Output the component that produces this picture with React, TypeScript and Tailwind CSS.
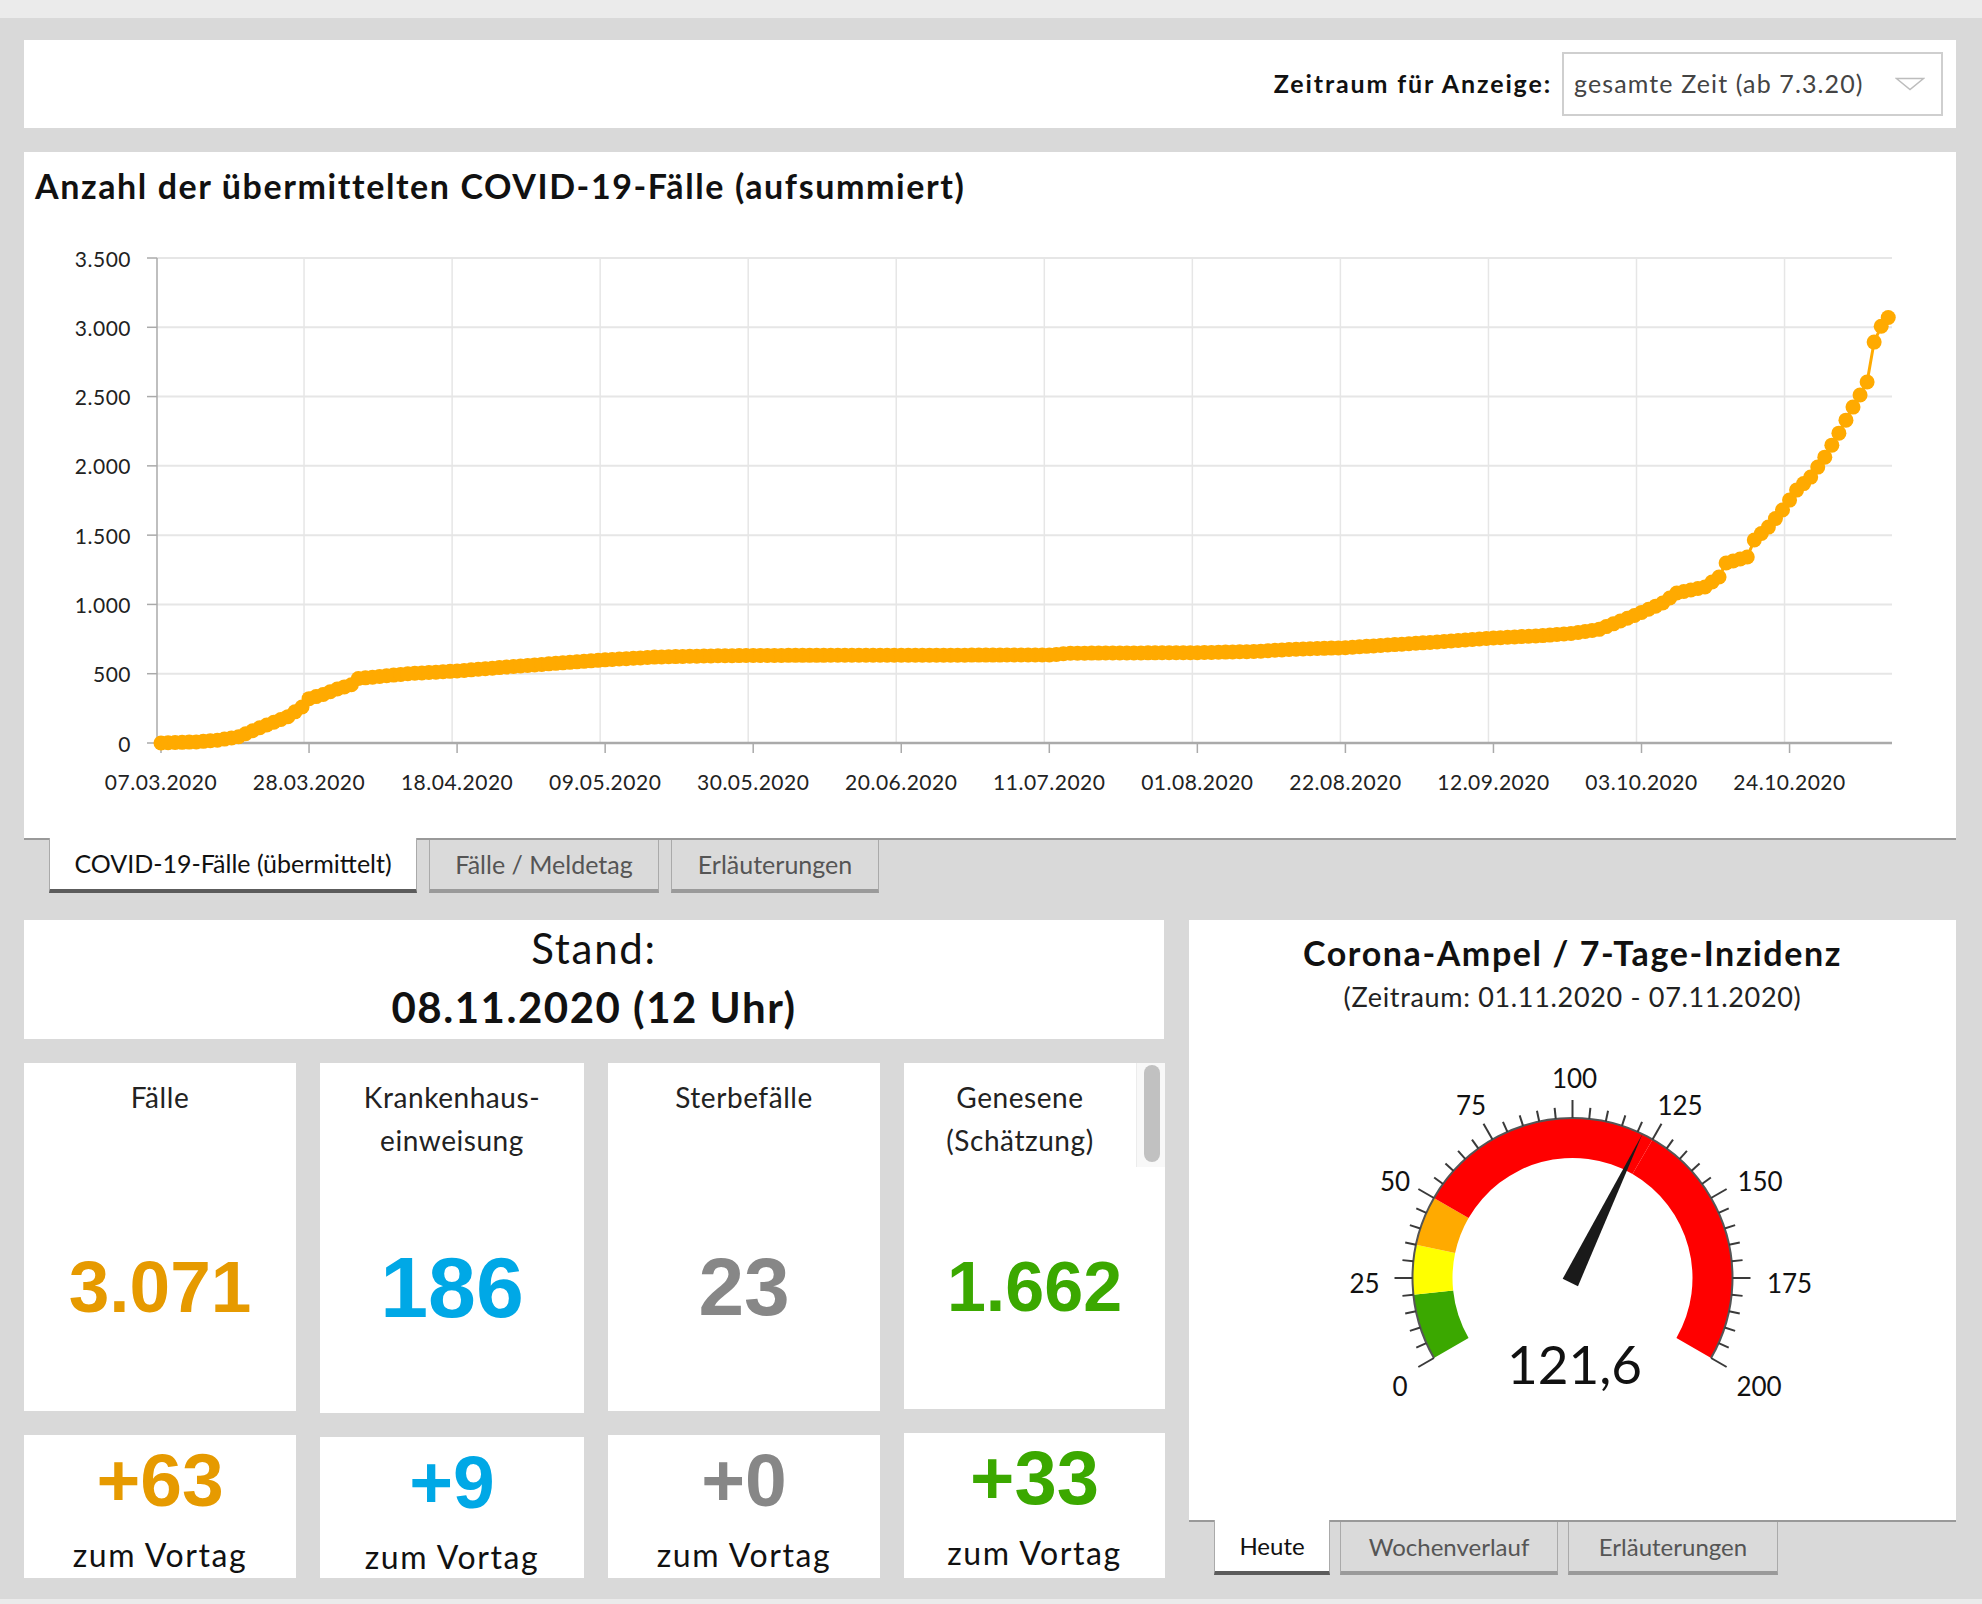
import React from 'react';

// cumulative case anchors (day since 07.03.2020, value)
const anchors: [number, number][] = [
  [0, 0], [5, 8], [8, 20], [11, 45], [14, 110], [16, 150], [18, 190], [20, 260], [21, 320],
  [23, 350], [25, 390], [27, 420], [28, 465], [31, 480], [35, 500], [42, 520], [49, 548],
  [56, 575], [63, 600], [70, 620], [77, 628], [84, 632], [126, 635], [129, 648], [147, 652],
  [155, 660], [160, 675], [168, 688], [175, 710], [182, 732], [189, 758], [196, 775], [200, 790],
  [204, 820], [209, 920], [213, 1010], [215, 1082], [219, 1126], [221, 1198], [222, 1299],
  [225, 1342], [226, 1465], [228, 1558], [230, 1681], [232, 1825], [234, 1919], [236, 2063],
  [238, 2236], [239, 2330], [240, 2424], [241, 2511], [242, 2605], [243, 2893], [244, 3008],
  [245, 3071],
];

function buildSeries() {
  const out: number[] = [];
  for (let d = 0; d <= 245; d++) {
    let i = 0;
    while (i < anchors.length - 1 && anchors[i + 1][0] < d) i++;
    const [d0, v0] = anchors[i];
    const [d1, v1] = anchors[Math.min(i + 1, anchors.length - 1)];
    out.push(d1 === d0 ? v0 : v0 + ((v1 - v0) * (d - d0)) / (d1 - d0));
  }
  return out;
}

const xLabels = [
  '07.03.2020', '28.03.2020', '18.04.2020', '09.05.2020', '30.05.2020', '20.06.2020',
  '11.07.2020', '01.08.2020', '22.08.2020', '12.09.2020', '03.10.2020', '24.10.2020',
];
const yLabels = ['0', '500', '1.000', '1.500', '2.000', '2.500', '3.000', '3.500'];

function CasesChart() {
  const series = buildSeries();
  const px = (d: number) => 137 + d * 7.05;
  const py = (v: number) => 537 - v * 0.13857;
  const line = series.map((v, d) => `${px(d).toFixed(1)},${py(v).toFixed(1)}`).join(' ');

  return (
    <svg width="1932" height="632" viewBox="0 0 1932 632" className="block">
      {/* horizontal grid */}
      {yLabels.map((l, i) => (
        <g key={l}>
          {i > 0 && <line x1="133" x2="1868" y1={py(i * 500)} y2={py(i * 500)} stroke="#e6e6e6" strokeWidth="2" />}
          <line x1="123" x2="133" y1={py(i * 500)} y2={py(i * 500)} stroke="#aaa" strokeWidth="1.5" />
          <text x="107" y={py(i * 500)} textAnchor="end" dominantBaseline="central" fontSize="21" letterSpacing="0.5" fill="#222">
            {l}
          </text>
        </g>
      ))}
      {/* vertical grid + ticks */}
      {xLabels.map((l, k) => {
        const x = px(k * 21);
        return (
          <g key={l}>
            {k > 0 && <line x1={x - 5} x2={x - 5} y1="52" y2="537" stroke="#e6e6e6" strokeWidth="1.5" />}
            <line x1={x} x2={x} y1="537" y2="547" stroke="#aaa" strokeWidth="1.5" />
            <text x={x} y="575" textAnchor="middle" dominantBaseline="central" fontSize="21" letterSpacing="0.5" fill="#222">
              {l}
            </text>
          </g>
        );
      })}
      <line x1="133" x2="133" y1="52" y2="537" stroke="#aaa" strokeWidth="1.5" />
      <line x1="133" x2="1868" y1="537" y2="537" stroke="#aaa" strokeWidth="2.5" />
      <polyline points={line} fill="none" stroke="#ffaa00" strokeWidth="3" />
      {series.map((v, d) => (
        <circle key={d} cx={px(d)} cy={py(v)} r="7.5" fill="#ffaa00" />
      ))}
    </svg>
  );
}

const CX = 383.5;
const CY = 264;
const ang = (v: number) => ((210 - 1.2 * v) * Math.PI) / 180;
const pt = (v: number, r: number): [number, number] => [CX + r * Math.cos(ang(v)), CY - r * Math.sin(ang(v))];

function band(v1: number, v2: number, ri: number, ro: number) {
  const [x1, y1] = pt(v1, ro);
  const [x2, y2] = pt(v2, ro);
  const [x3, y3] = pt(v2, ri);
  const [x4, y4] = pt(v1, ri);
  const large = (v2 - v1) * 1.2 > 180 ? 1 : 0;
  return `M${x1} ${y1} A${ro} ${ro} 0 ${large} 1 ${x2} ${y2} L${x3} ${y3} A${ri} ${ri} 0 ${large} 0 ${x4} ${y4} Z`;
}

// small nudges so the scale labels sit like the original widget
const labelShift: Record<number, number> = { 0: 5, 25: -3, 50: 0, 75: 1, 100: 2, 125: 5, 150: 10, 175: 12, 200: 9 };

function Gauge() {
  const value = 121.6;
  const a = ang(value);
  const ux = Math.cos(a);
  const uy = -Math.sin(a);
  const tip = pt(value, 160);
  const bx = CX - 5 * ux;
  const by = CY - 5 * uy;
  const needle = `${tip[0]},${tip[1]} ${bx - 8.5 * uy},${by + 8.5 * ux} ${bx + 8.5 * uy},${by - 8.5 * ux}`;
  const ticks: number[] = [];
  for (let v = 0; v <= 200; v += 5) ticks.push(v);
  const [sx, sy] = pt(0, 160);
  const [ex, ey] = pt(200, 160);

  return (
    <svg width="767" height="506" viewBox="0 0 767 506" className="block">
      <path d={band(0, 20, 120, 160)} fill="#3ba800" />
      <path d={band(20, 35, 120, 160)} fill="#ffff00" />
      <path d={band(35, 50, 120, 160)} fill="#ffaa00" />
      <path d={band(50, 125, 120, 160)} fill="#ff0000" />
      <path d={band(125, 200, 120, 160)} fill="#ff0000" />
      <path d={`M${sx} ${sy} A160 160 0 1 1 ${ex} ${ey}`} fill="none" stroke="#555" strokeWidth="2" />
      {ticks.map((v) => {
        const major = v % 25 === 0;
        const [x1, y1] = pt(v, 160);
        const [x2, y2] = pt(v, major ? 178 : 171);
        return <line key={v} x1={x1} y1={y1} x2={x2} y2={y2} stroke="#3a3a3a" strokeWidth="2" />;
      })}
      {ticks
        .filter((v) => v % 25 === 0)
        .map((v) => {
          const [x, y] = pt(v, 205);
          return (
            <text key={v} x={x + labelShift[v]} y={y + 5} textAnchor="middle" dominantBaseline="central" fontSize="26" fill="#111">
              {v}
            </text>
          );
        })}
      <polygon points={needle} fill="#1a1a1a" />
      <text x={CX + 2} y="349" textAnchor="middle" dominantBaseline="central" fontSize="53" fill="#111">
        121,6
      </text>
    </svg>
  );
}

function StatCard({
  label,
  value,
  delta,
  color,
  valueSize,
  deltaSize,
  topH,
  bottomH,
  scroll,
}: {
  label: React.ReactNode;
  value: string;
  delta: string;
  color: string;
  valueSize: string;
  deltaSize: string;
  topH: string;
  bottomH: string;
  scroll?: boolean;
}) {
  return (
    <div className="flex flex-col gap-[24px]">
      <div className={`relative bg-white ${topH} flex flex-col items-center`}>
        <div
          className={`self-stretch pt-[13px] h-[99px] text-[28px] leading-[43px] tracking-[0.02em] text-[#222] text-center ${
            scroll ? 'pr-[29px]' : ''
          }`}
        >
          {label}
        </div>
        <div className={`mt-[80px] leading-[90px] font-bold font-['Liberation_Sans',Arial,sans-serif] ${valueSize} ${color}`}>
          {value}
        </div>
        {scroll && (
          <div className="absolute right-0 top-0 w-[29px] h-[104px] bg-[#f8f8f8] border-l border-[#ececec]">
            <div className="ml-[7px] mt-[2px] w-[16px] h-[97px] rounded-full bg-[#c1c1c1]" />
          </div>
        )}
      </div>
      <div className={`bg-white ${bottomH} flex flex-col items-center`}>
        <div className={`pt-[5px] leading-[80px] font-bold font-['Liberation_Sans',Arial,sans-serif] ${deltaSize} ${color}`}>
          {delta}
        </div>
        <div className="mt-[15px] text-[32px] leading-[40px] tracking-[0.05em] text-[#111]">zum Vortag</div>
      </div>
    </div>
  );
}

export default function App() {
  return (
    <div className="min-h-screen bg-[#ebebeb] pt-[18px] pb-[5px] font-['Lato','Open_Sans',sans-serif]">
      <div className="bg-[#d9d9d9] pl-[24px] pr-[26px] pt-[22px] pb-[21px]">
        {/* period selector */}
        <div className="h-[88px] bg-white flex items-center justify-end pr-[13px]">
          <span className="text-[25px] font-bold tracking-[0.075em] text-[#111] mr-[10px]">Zeitraum für Anzeige:</span>
          <div className="w-[381px] h-[64px] border-2 border-[#cfcfcf] bg-white flex items-center justify-between pl-[10px] pr-[16px]">
            <span className="text-[25px] tracking-[0.045em] text-[#444]">gesamte Zeit (ab 7.3.20)</span>
            <svg width="30" height="14" viewBox="0 0 30 14">
              <path d="M1.5 1.5 L28.5 1.5 L15 12.5 Z" fill="none" stroke="#bdbdbd" strokeWidth="1.5" />
            </svg>
          </div>
        </div>

        {/* chart panel */}
        <div className="mt-[24px] bg-white border-b-2 border-[#999] h-[688px]">
          <h1 className="pt-[14px] pl-[11px] text-[34px] leading-[40px] font-bold tracking-[0.047em] text-[#111]">
            Anzahl der übermittelten COVID-19-Fälle (aufsummiert)
          </h1>
          <CasesChart />
        </div>
        <div className="flex items-start gap-[12px] pl-[25px] -mt-[2px]">
          <div className="w-[368px] h-[55px] bg-white border-x border-[#aaa] border-b-4 border-b-[#5c5c5c] flex items-center justify-center text-[25px] text-[#111]">
            COVID-19-Fälle (übermittelt)
          </div>
          <div className="mt-[2px] w-[230px] h-[53px] bg-[#dadada] border-x border-[#aaa] border-b-4 border-b-[#9a9a9a] flex items-center justify-center text-[25px] text-[#555]">
            Fälle / Meldetag
          </div>
          <div className="mt-[2px] w-[208px] h-[53px] bg-[#dadada] border-x border-[#aaa] border-b-4 border-b-[#9a9a9a] flex items-center justify-center text-[25px] text-[#555]">
            Erläuterungen
          </div>
        </div>

        {/* lower section */}
        <div className="mt-[27px] flex gap-[25px] items-start">
          <div className="w-[1140px]">
            <div className="h-[119px] bg-white flex flex-col items-center text-[#111]">
              <div className="pt-[4px] text-[42px] leading-[48px] tracking-[0.04em]">Stand:</div>
              <div className="mt-[11px] text-[42px] leading-[48px] font-bold tracking-[0.036em]">08.11.2020 (12 Uhr)</div>
            </div>
            <div className="mt-[24px] grid grid-cols-[272px_264px_272px_261px] gap-x-[24px]">
              <StatCard
                label="Fälle"
                value="3.071"
                delta="+63"
                color="text-[#e69a00]"
                valueSize="text-[73px]"
                deltaSize="text-[75px]"
                topH="h-[348px]"
                bottomH="h-[143px]"
              />
              <StatCard
                label={<>Krankenhaus-<br />einweisung</>}
                value="186"
                delta="+9"
                color="text-[#00a8e6]"
                valueSize="text-[86px]"
                deltaSize="text-[75px]"
                topH="h-[350px]"
                bottomH="h-[141px]"
              />
              <StatCard
                label="Sterbefälle"
                value="23"
                delta="+0"
                color="text-[#878787]"
                valueSize="text-[82px]"
                deltaSize="text-[75px]"
                topH="h-[348px]"
                bottomH="h-[143px]"
              />
              <StatCard
                label={<>Genesene<br />(Schätzung)</>}
                value="1.662"
                delta="+33"
                color="text-[#3ba800]"
                valueSize="text-[70px]"
                deltaSize="text-[76px]"
                topH="h-[346px]"
                bottomH="h-[145px]"
                scroll
              />
            </div>
          </div>

          <div className="w-[767px]">
            <div className="h-[602px] bg-white border-b-2 border-[#999] flex flex-col items-center">
              <div className="pt-[13px] text-[34px] leading-[40px] font-bold tracking-[0.047em] text-[#111]">
                Corona-Ampel / 7-Tage-Inzidenz
              </div>
              <div className="mt-[7px] text-[27px] leading-[34px] tracking-[0.025em] text-[#222]">
                (Zeitraum: 01.11.2020 - 07.11.2020)
              </div>
              <Gauge />
            </div>
            <div className="flex items-start gap-[10px] pl-[25px] -mt-[2px]">
              <div className="w-[116px] h-[55px] bg-white border-x border-[#aaa] border-b-4 border-b-[#5c5c5c] flex items-center justify-center text-[24px] text-[#111]">
                Heute
              </div>
              <div className="mt-[2px] w-[218px] h-[53px] bg-[#dadada] border-x border-[#aaa] border-b-4 border-b-[#9a9a9a] flex items-center justify-center text-[24px] text-[#555]">
                Wochenverlauf
              </div>
              <div className="mt-[2px] w-[210px] h-[53px] bg-[#dadada] border-x border-[#aaa] border-b-4 border-b-[#9a9a9a] flex items-center justify-center text-[24px] text-[#555]">
                Erläuterungen
              </div>
            </div>
          </div>
        </div>
      </div>
    </div>
  );
}
